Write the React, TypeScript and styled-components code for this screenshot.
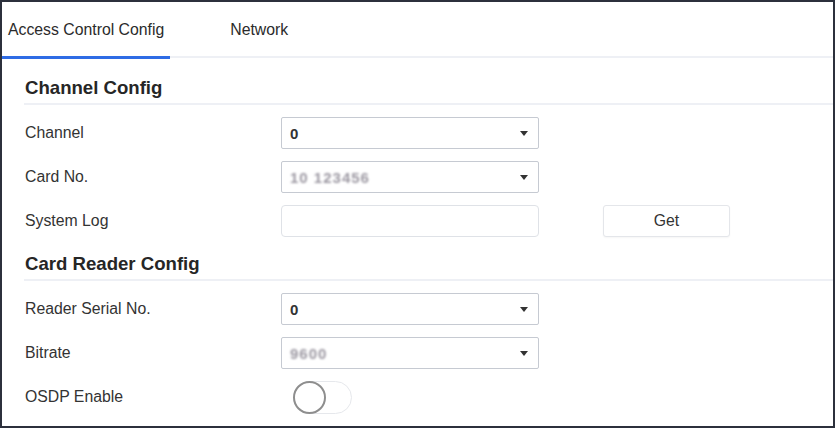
import React, {useState} from 'react'
import styled, {createGlobalStyle} from 'styled-components'

const GlobalStyle = createGlobalStyle`
    body {
        margin: 0;
        background: #ffffff;
        font-family: "Liberation Sans", Arial, sans-serif;
    }
`;

const Frame = styled.div`
    box-sizing: border-box;
    width: 835px;
    height: 428px;
    border: 2px solid #2c303c;
    background: #ffffff;
    overflow: hidden;
    color: #333333;
`;

const TabBar = styled.div`
    display: flex;
    height: 56px;
    border-bottom: 2px solid #eef0f5;
    box-sizing: border-box;
`;

const Tab = styled.div<{ $active?: boolean }>`
    display: flex;
    align-items: center;
    box-sizing: border-box;
    height: 57px;
    padding: 2px 6px 0 6px;
    margin-right: ${props => props.$active ? '54px' : '0'};
    font-size: 15.8px;
    color: #2b2b2b;
    border-bottom: 3px solid ${props => props.$active ? '#2f6ce5' : 'transparent'};
    cursor: pointer;
`;

const Content = styled.div`
    padding-left: 22px;
`;

const SectionTitle = styled.div<{ $first?: boolean }>`
    padding: ${props => props.$first ? '18px' : '9px'} 0 3px 1px;
    line-height: 24px;
    font-size: 18.6px;
    font-weight: bold;
    color: #262626;
    border-bottom: 2px solid #eef0f5;
    margin-bottom: 6px;
`;

const Row = styled.div`
    display: flex;
    align-items: center;
    height: 44px;
`;

const Label = styled.div`
    width: 256px;
    padding-left: 1px;
    font-size: 15.8px;
    color: #333333;
`;

const Select = styled.div`
    box-sizing: border-box;
    display: flex;
    align-items: center;
    justify-content: space-between;
    width: 258px;
    height: 32px;
    padding: 0 10px 0 8px;
    border: 1px solid #c6cad2;
    border-radius: 2px;
    font-size: 15px;
    font-weight: bold;
    color: #333333;
`;

const Masked = styled.span`
    font-weight: bold;
    color: #9c98a2;
    filter: blur(1.3px);
    letter-spacing: 1px;
`;

const Caret = styled.span`
    width: 0;
    height: 0;
    border-left: 4.5px solid transparent;
    border-right: 4.5px solid transparent;
    border-top: 5px solid #333333;
`;

const TextBox = styled.input`
    box-sizing: border-box;
    width: 258px;
    height: 32px;
    border: 1px solid #dfe2e7;
    border-radius: 4px;
    outline: none;
    font: inherit;
`;

const GetButton = styled.button`
    box-sizing: border-box;
    width: 127px;
    height: 32px;
    margin-left: 64px;
    background: #ffffff;
    border: 1px solid #e4e6ea;
    border-radius: 3px;
    box-shadow: 0 1px 2px rgba(0, 0, 0, 0.04);
    font-family: inherit;
    font-size: 15.8px;
    color: #333333;
    cursor: pointer;
`;

const Switch = styled.button<{ $on: boolean }>`
    position: relative;
    box-sizing: border-box;
    width: 59px;
    height: 33px;
    margin-left: 12px;
    padding: 0;
    border: 1px solid #e6e8ec;
    border-radius: 17px;
    background: ${props => props.$on ? '#2f6ce5' : '#ffffff'};
    cursor: pointer;
`;

const Knob = styled.span<{ $on: boolean }>`
    position: absolute;
    top: -1px;
    left: ${props => props.$on ? '25px' : '-1px'};
    box-sizing: border-box;
    width: 33px;
    height: 33px;
    border: 2px solid #8e8e8e;
    border-radius: 50%;
    background: #ffffff;
`;

const App = () => {
    const [tab, setTab] = useState(0);
    const [osdp, setOsdp] = useState(false);

    return (
        <>
            <GlobalStyle/>
            <Frame>
                <TabBar>
                    <Tab $active={tab === 0} onClick={() => setTab(0)}>Access Control Config</Tab>
                    <Tab $active={tab === 1} onClick={() => setTab(1)}>Network</Tab>
                </TabBar>
                <Content>
                    <SectionTitle $first>Channel Config</SectionTitle>
                    <Row>
                        <Label>Channel</Label>
                        <Select>0<Caret/></Select>
                    </Row>
                    <Row>
                        <Label>Card No.</Label>
                        <Select><Masked>10 123456</Masked><Caret/></Select>
                    </Row>
                    <Row>
                        <Label>System Log</Label>
                        <TextBox/>
                        <GetButton type={'button'}>Get</GetButton>
                    </Row>

                    <SectionTitle>Card Reader Config</SectionTitle>
                    <Row>
                        <Label>Reader Serial No.</Label>
                        <Select>0<Caret/></Select>
                    </Row>
                    <Row>
                        <Label>Bitrate</Label>
                        <Select><Masked>9600</Masked><Caret/></Select>
                    </Row>
                    <Row>
                        <Label>OSDP Enable</Label>
                        <Switch type={'button'} $on={osdp} onClick={() => setOsdp(!osdp)}>
                            <Knob $on={osdp}/>
                        </Switch>
                    </Row>
                </Content>
            </Frame>
        </>
    )
}

export default App
